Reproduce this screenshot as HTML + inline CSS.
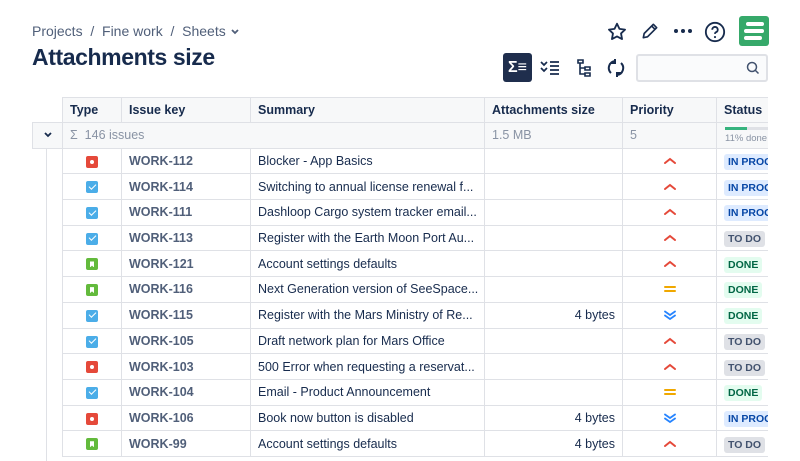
<!DOCTYPE html><html><head><style>
*{box-sizing:border-box;margin:0;padding:0}
html,body{width:800px;height:461px;overflow:hidden}
body{background:#fff;font-family:"Liberation Sans",sans-serif;color:#172b4d;position:relative}
.bc{position:absolute;left:32px;top:23px;font-size:14px;color:#505f79}
h1{position:absolute;left:32px;top:44px;font-size:23px;font-weight:700;color:#172b4d;letter-spacing:-.4px}
.tb{position:absolute;border-collapse:collapse;left:32px;top:97px;width:736px;font-size:12.5px;table-layout:fixed}
.tb td{border:1px solid #dfe1e6;height:25.7px;padding:0 7px;white-space:nowrap;overflow:hidden}
.hd td{background:#f7f8f9;font-weight:bold;height:25px}
.gr td{background:#f7f8f9;color:#8993a4}
.key{color:#505f79;font-weight:600}
.ic{display:inline-block;width:12px;height:12px;border-radius:2px;vertical-align:middle;position:relative}
.bug{background:#e5493a}.bug:after{content:"";position:absolute;left:4px;top:4px;width:4px;height:4px;border-radius:50%;background:#fff}
.task{background:#4bade8}.task:after{content:"";position:absolute;left:3px;top:2.5px;width:6px;height:3px;border-left:1.6px solid #fff;border-bottom:1.6px solid #fff;transform:rotate(-45deg)}
.story{background:#63ba3c}.story:after{content:"";position:absolute;left:4px;top:3px;width:4px;height:6px;background:#fff;clip-path:polygon(0 0,100% 0,100% 100%,50% 70%,0 100%)}
.lz{font-size:10.5px;font-weight:bold;padding:2px 4px;border-radius:3px}
.ip{background:#deebff;color:#0747a6}.dn{background:#e3fcef;color:#006644}.td{background:#dfe1e6;color:#42526e}
.c{text-align:center}.r{text-align:right}
.p{display:block;margin:0 auto}
.g{border-top:none!important;border-bottom:none!important}
</style></head><body>
<div class="bc">Projects &nbsp;/&nbsp; Fine work &nbsp;/&nbsp; Sheets <svg width="10" height="8" viewBox="0 0 10 8"><path d="M2 2l3 3 3-3" fill="none" stroke="#505f79" stroke-width="1.8"/></svg></div>
<h1>Attachments size</h1>
<svg style="position:absolute;left:606px;top:21px" width="22" height="22" viewBox="0 0 24 24"><path d="M12 3l2.7 5.6 6.1.8-4.4 4.2 1.1 6.1L12 16.8l-5.5 2.9 1.1-6.1L3.2 9.4l6.1-.8z" fill="none" stroke="#172b4d" stroke-width="2" stroke-linejoin="round"/></svg>
<svg style="position:absolute;left:640px;top:21px" width="20" height="20" viewBox="0 0 24 24"><path d="M4 20l1-5L16 4l4 4L9 19z M14 6l4 4" fill="none" stroke="#172b4d" stroke-width="2" stroke-linejoin="round"/></svg>
<svg style="position:absolute;left:673px;top:28px" width="20" height="6"><circle cx="3" cy="3" r="2" fill="#172b4d"/><circle cx="10" cy="3" r="2" fill="#172b4d"/><circle cx="17" cy="3" r="2" fill="#172b4d"/></svg>
<svg style="position:absolute;left:704px;top:21px" width="22" height="22" viewBox="0 0 24 24"><circle cx="12" cy="12" r="10" fill="none" stroke="#172b4d" stroke-width="2"/><path d="M9 9.5a3 3 0 1 1 4 2.8c-.8.4-1 1-1 1.7" fill="none" stroke="#172b4d" stroke-width="2"/><circle cx="12" cy="17.5" r="1.2" fill="#172b4d"/></svg>
<div style="position:absolute;left:739px;top:16px;width:30px;height:30px;background:#36a96a;border-radius:3px"><svg width="30" height="30" viewBox="0 0 30 30"><path d="M9 8h14M7 15h16M7 22h14" stroke="#fff" stroke-width="4" stroke-linecap="round"/></svg></div>
<div style="position:absolute;left:503px;top:53px;width:29px;height:29px;background:#1f2e4d;border-radius:3px;color:#fff;font-weight:bold;font-size:16px;text-align:center;line-height:29px">Σ≡</div>
<svg style="position:absolute;left:540px;top:59px" width="20" height="16" viewBox="0 0 20 16"><path d="M1 3l3 3 3-3 M1 9l3 3 3-3 M10 3h9 M10 7h9 M10 11h9 M10 15h9" fill="none" stroke="#172b4d" stroke-width="1.7"/></svg>
<svg style="position:absolute;left:575px;top:58px" width="18" height="20" viewBox="0 0 18 20"><path d="M3 2h5v3H3z M10 9h5v3h-5z M10 15h5v3h-5z M5 5v11h5 M5 10h5" fill="none" stroke="#172b4d" stroke-width="1.6"/></svg>
<svg style="position:absolute;left:607px;top:58px" width="18" height="20" viewBox="0 0 18 20"><path d="M8 3a7 7 0 0 0-4 12 M10 17a7 7 0 0 0 4-12 M8 1v4h-4 M10 19v-4h4" fill="none" stroke="#172b4d" stroke-width="2"/></svg>
<div style="position:absolute;left:636px;top:54px;width:132px;height:28px;border:2px solid #dfe1e6;border-radius:3px;background:#fafbfc"><svg style="position:absolute;right:6px;top:5px" width="14" height="14" viewBox="0 0 14 14"><circle cx="6" cy="6" r="4.5" fill="none" stroke="#42526e" stroke-width="1.5"/><path d="M9.5 9.5l3 3" stroke="#42526e" stroke-width="1.5"/></svg></div>
<svg style="display:none"><defs>
<symbol id="hi" viewBox="0 0 14 10"><path d="M2 7l5-4 5 4" fill="none" stroke="#e5493a" stroke-width="2" stroke-linecap="round"/></symbol>
<symbol id="md" viewBox="0 0 14 10"><path d="M2 3h10M2 7h10" fill="none" stroke="#f0a800" stroke-width="2" stroke-linecap="round"/></symbol>
<symbol id="lo" viewBox="0 0 14 10"><path d="M2 1.5l5 3.5 5-3.5M2 5.5l5 3.5 5-3.5" fill="none" stroke="#2684ff" stroke-width="1.8" stroke-linecap="round"/></symbol>
</defs></svg>
<table class="tb">
<colgroup><col style="width:30px"><col style="width:59px"><col style="width:129px"><col style="width:234px"><col style="width:138px"><col style="width:94px"><col style="width:52px"></colgroup>
<tr class="hd"><td style="border:none;border-bottom:1px solid #dfe1e6;background:#fff"></td><td>Type</td><td>Issue key</td><td>Summary</td><td>Attachments size</td><td>Priority</td><td>Status</td></tr>
<tr class="gr"><td class="c" style="background:#f7f8f9"><svg width="10" height="8" viewBox="0 0 10 8"><path d="M2 2l3 3 3-3" fill="none" stroke="#172b4d" stroke-width="1.8"/></svg></td><td colspan="3">Σ &nbsp;146 issues</td><td>1.5 MB</td><td>5</td><td style="font-size:9.5px;padding:0 0 0 8px"><div style="width:44px;height:3px;background:#dfe1e6;margin-bottom:3px"><div style="width:22px;height:3px;background:#36b37e"></div></div>11% done</td></tr>
<tr><td class="g"></td><td class="c"><span class="ic bug"></span></td><td class="key">WORK-112</td><td>Blocker - App Basics</td><td></td><td><svg class="p" width="14" height="10"><use href="#hi"/></svg></td><td><span class="lz ip">IN PROG</span></td></tr>
<tr><td class="g"></td><td class="c"><span class="ic task"></span></td><td class="key">WORK-114</td><td>Switching to annual license renewal f...</td><td></td><td><svg class="p" width="14" height="10"><use href="#hi"/></svg></td><td><span class="lz ip">IN PROG</span></td></tr>
<tr><td class="g"></td><td class="c"><span class="ic task"></span></td><td class="key">WORK-111</td><td>Dashloop Cargo system tracker email...</td><td></td><td><svg class="p" width="14" height="10"><use href="#hi"/></svg></td><td><span class="lz ip">IN PROG</span></td></tr>
<tr><td class="g"></td><td class="c"><span class="ic task"></span></td><td class="key">WORK-113</td><td>Register with the Earth Moon Port Au...</td><td></td><td><svg class="p" width="14" height="10"><use href="#hi"/></svg></td><td><span class="lz td">TO DO</span></td></tr>
<tr><td class="g"></td><td class="c"><span class="ic story"></span></td><td class="key">WORK-121</td><td>Account settings defaults</td><td></td><td><svg class="p" width="14" height="10"><use href="#hi"/></svg></td><td><span class="lz dn">DONE</span></td></tr>
<tr><td class="g"></td><td class="c"><span class="ic story"></span></td><td class="key">WORK-116</td><td>Next Generation version of SeeSpace...</td><td></td><td><svg class="p" width="14" height="10"><use href="#md"/></svg></td><td><span class="lz dn">DONE</span></td></tr>
<tr><td class="g"></td><td class="c"><span class="ic task"></span></td><td class="key">WORK-115</td><td>Register with the Mars Ministry of Re...</td><td class="r">4 bytes</td><td><svg class="p" width="14" height="10"><use href="#lo"/></svg></td><td><span class="lz dn">DONE</span></td></tr>
<tr><td class="g"></td><td class="c"><span class="ic task"></span></td><td class="key">WORK-105</td><td>Draft network plan for Mars Office</td><td></td><td><svg class="p" width="14" height="10"><use href="#hi"/></svg></td><td><span class="lz td">TO DO</span></td></tr>
<tr><td class="g"></td><td class="c"><span class="ic bug"></span></td><td class="key">WORK-103</td><td>500 Error when requesting a reservat...</td><td></td><td><svg class="p" width="14" height="10"><use href="#hi"/></svg></td><td><span class="lz td">TO DO</span></td></tr>
<tr><td class="g"></td><td class="c"><span class="ic task"></span></td><td class="key">WORK-104</td><td>Email - Product Announcement</td><td></td><td><svg class="p" width="14" height="10"><use href="#md"/></svg></td><td><span class="lz dn">DONE</span></td></tr>
<tr><td class="g"></td><td class="c"><span class="ic bug"></span></td><td class="key">WORK-106</td><td>Book now button is disabled</td><td class="r">4 bytes</td><td><svg class="p" width="14" height="10"><use href="#lo"/></svg></td><td><span class="lz ip">IN PROG</span></td></tr>
<tr><td class="g"></td><td class="c"><span class="ic story"></span></td><td class="key">WORK-99</td><td>Account settings defaults</td><td class="r">4 bytes</td><td><svg class="p" width="14" height="10"><use href="#hi"/></svg></td><td><span class="lz td">TO DO</span></td></tr>
</table>
<div style="position:absolute;left:768px;top:90px;width:32px;height:371px;background:#fff"></div>
<div style="position:absolute;left:32px;top:149px;width:15px;height:312px;border-right:1px solid #dfe1e6;background:#fff"></div>
</body></html>
